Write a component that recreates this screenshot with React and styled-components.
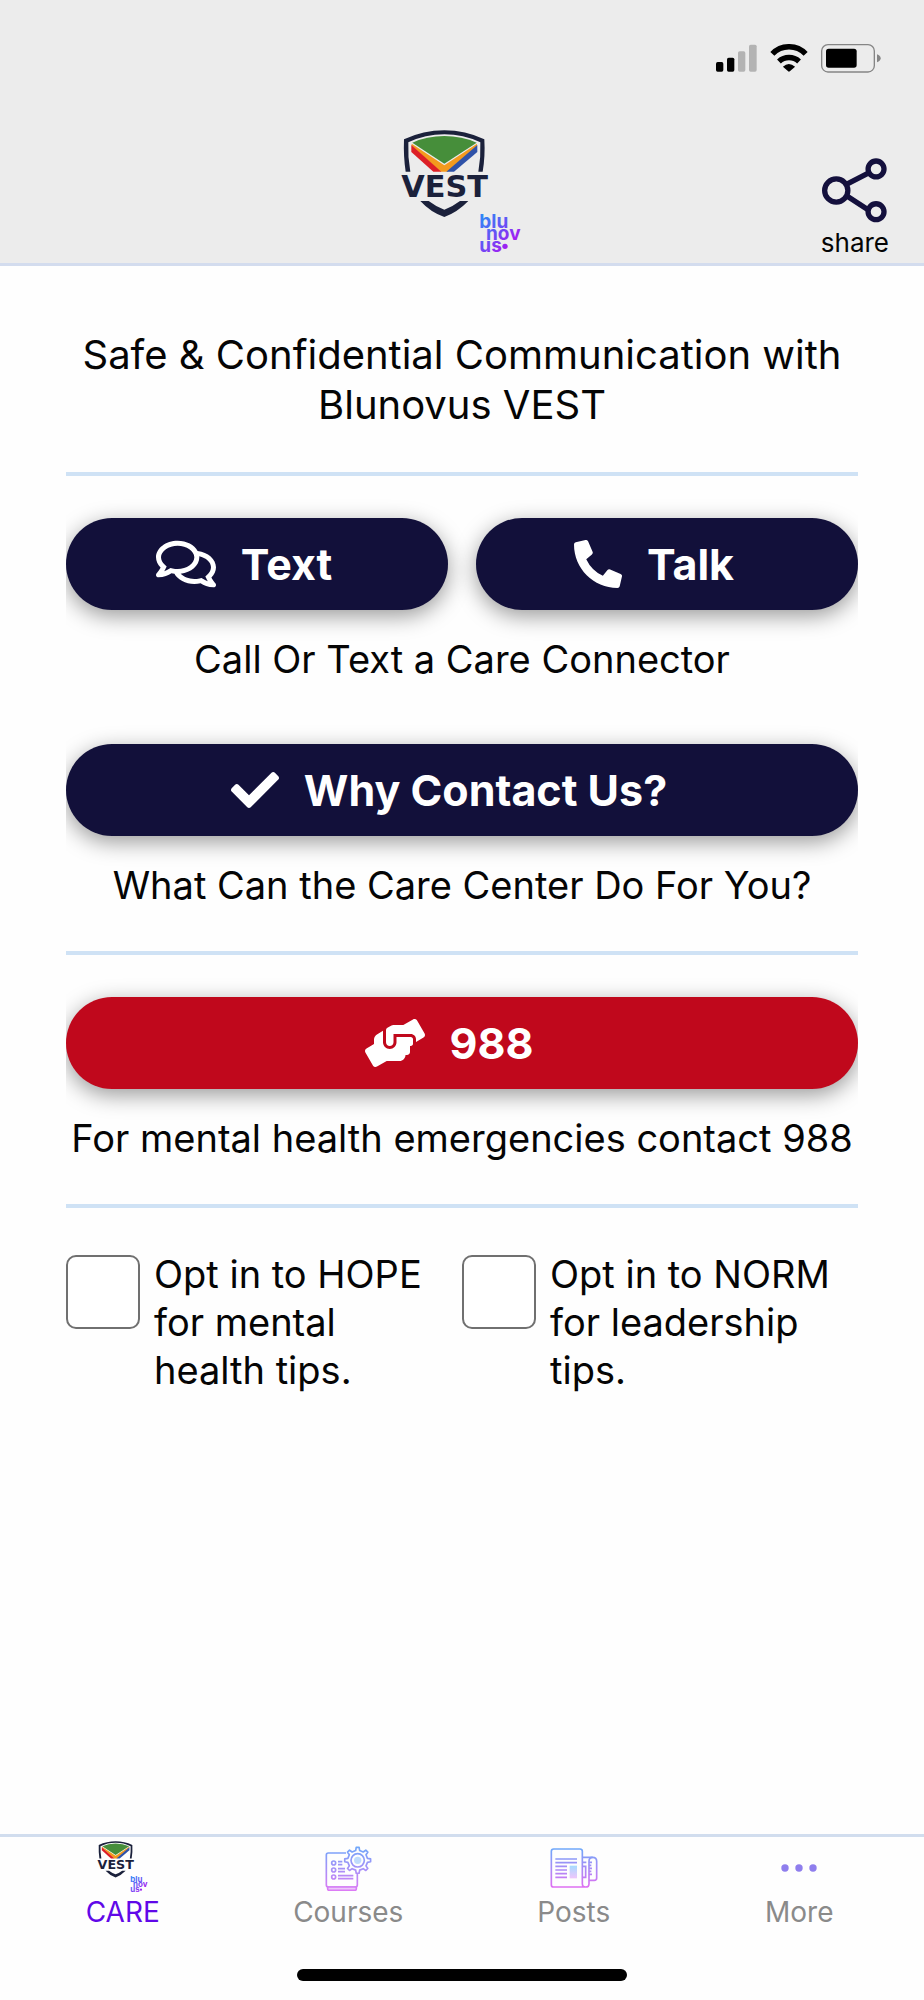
import React, { useId, useState } from "react";
import styled, { createGlobalStyle } from "styled-components";
import { FaCheck, FaHandsHelping, FaPhoneAlt, FaRegComments } from "react-icons/fa";

const GlobalStyle = createGlobalStyle`
  * {
    box-sizing: border-box;
  }

  body {
    margin: 0;
    background: #fefefe;
    color: #050505;
    font-family: Inter, "Liberation Sans", sans-serif;
  }

  h1, p {
    margin: 0;
    font-weight: 400;
  }

  svg {
    display: block;
  }
`;

const Page = styled.div`
  display: flex;
  flex-direction: column;
  min-height: 100vh;
`;

const Header = styled.header`
  padding: 44px 0 4px;
  background: #ececec;
  border-bottom: 3px solid #d3dcee;
`;

const StatusBar = styled.div`
  display: flex;
  justify-content: flex-end;
  gap: 13px;
  height: 28px;
  padding-right: 43px;
`;

const BrandRow = styled.div`
  display: grid;
  grid-template-columns: 1fr auto 1fr;
  align-items: end;
  margin-top: 58px;
  padding: 0 35px;
`;

const ShareButton = styled.button`
  grid-column: 3;
  justify-self: end;
  display: flex;
  flex-direction: column;
  align-items: center;
  gap: 4px;
  padding: 0;
  border: 0;
  background: none;
  color: #050505;
  font: 400 26px/32px Inter, sans-serif;
  cursor: pointer;
`;

const LogoCell = styled.div`
  grid-column: 2;
`;

const Main = styled.main`
  flex: 1;
  padding: 64px 66px;
`;

const Title = styled.h1`
  font-size: 40px;
  line-height: 50px;
  text-align: center;
`;

const Divider = styled.hr`
  height: 4px;
  margin: 42px 0;
  border: 0;
  background: #cfe2f5;
`;

const Section = styled.section`
  overflow-x: clip;

  & + & {
    margin-top: 61px;
  }
`;

const ButtonRow = styled.div`
  display: grid;
  grid-auto-flow: column;
  grid-auto-columns: 1fr;
  gap: 28px;
`;

const Pill = styled.button`
  display: flex;
  align-items: center;
  justify-content: center;
  gap: 25px;
  height: 92px;
  padding: 0 26px 0 0;
  border: 0;
  border-radius: 46px;
  background: ${({ $danger }) => ($danger ? "#c0081c" : "#12103a")};
  box-shadow: 0 6px 22px rgba(0, 0, 0, 0.4);
  color: #fff;
  font: 700 43px/54px Inter, sans-serif;
  cursor: pointer;

  svg {
    width: ${({ $wide }) => ($wide ? "60px" : "48px")};
    height: auto;
  }
`;

const Caption = styled.p`
  margin-top: 25px;
  font-size: 38px;
  line-height: 48px;
  text-align: center;
`;

const Options = styled.div`
  display: grid;
  grid-template-columns: 1fr 1fr;
`;

const Option = styled.div`
  display: flex;
  align-items: flex-start;
  gap: 14px;
  padding-right: 24px;
  font-size: 38px;
  line-height: 48px;
`;

const Checkbox = styled.input`
  appearance: none;
  flex: none;
  width: 74px;
  height: 74px;
  margin: 5px 0 0;
  border: 2px solid #707070;
  border-radius: 10px;
  background: #fff;

  &:checked {
    background: #12103a;
  }
`;

const TabBar = styled.nav`
  border-top: 3px solid #d1ddee;
  padding-bottom: 19px;
`;

const Tabs = styled.div`
  display: grid;
  grid-template-columns: repeat(4, 1fr);
  padding: 4px 12px 0 10px;
`;

const Tab = styled.a`
  display: flex;
  flex-direction: column;
  align-items: center;
  color: ${({ $active }) => ($active ? "#6008e8" : "#8a8a8a")};
  font-size: 28px;
  line-height: 34px;
  text-decoration: none;
`;

const TabIcon = styled.span`
  display: flex;
  align-items: center;
  height: 54px;
`;

const HomeIndicator = styled.div`
  width: 330px;
  height: 12px;
  margin: 40px auto 0;
  border-radius: 6px;
  background: #000;
`;

const Signal = () => (
  <svg width="41" height="28" viewBox="48 43 123 84" aria-hidden="true">
    <rect x="48" y="97" width="22" height="29" rx="5" />
    <rect x="81" y="84" width="22" height="42" rx="5" />
    <rect x="114" y="65" width="22" height="61" rx="5" fill="#b3b3b3" />
    <rect x="147" y="45" width="23" height="81" rx="5" fill="#b3b3b3" />
  </svg>
);

const Wifi = () => (
  <svg width="38" height="28" viewBox="209 41 115 85" aria-hidden="true">
    <g fill="none" stroke="#000" strokeWidth="17">
      <path d="M216 71A70 70 0 0 1 317 71" />
      <path d="M236 94A45 45 0 0 1 297 94" />
    </g>
    <path d="M248 110Q266 93 285 110L269 124Q266 126 264 124Z" />
  </svg>
);

const Battery = () => (
  <svg width="60" height="29" viewBox="363 43 180 87" aria-hidden="true">
    <rect x="365" y="45" width="158" height="82" rx="19" fill="none" stroke="#858585" strokeWidth="4" />
    <rect x="378" y="57" width="92" height="57" rx="8" />
    <path d="M531 74Q542 78 542 86Q542 94 531 98Z" fill="#858585" />
  </svg>
);

const ShareIcon = () => (
  <svg width="65" height="65" viewBox="362 384 196 196" fill="none" stroke="#14103d" strokeWidth="16" aria-hidden="true">
    <circle cx="405" cy="482" r="35" />
    <circle cx="525" cy="417" r="24" />
    <circle cx="525" cy="546" r="24" />
    <path d="M437 463L503 429M436 498L502 541" />
  </svg>
);

const Logo = ({ width, height }) => {
  const id = useId();
  return (
    <svg width={width} height={height} viewBox="60 60 372 387" role="img" aria-label="Blunovus VEST">
      <defs>
        <linearGradient id={id} gradientUnits="userSpaceOnUse" x1="302" y1="322" x2="400" y2="420">
          <stop offset="0" stopColor="#2f86f6" />
          <stop offset="0.5" stopColor="#6a4df5" />
          <stop offset="1" stopColor="#b80cf0" />
        </linearGradient>
      </defs>
      <g fill="#1b213b">
        <path d="M77 185Q70 140 72 88Q130 61 193 61Q256 61 313 88Q316 140 308 185H295Q303 140 301 97Q250 73 193 73Q136 73 85 97Q83 140 91 185Z" />
        <path d="M121 273H146Q168 290 193 299Q218 290 240 273H265Q232 307 193 321Q152 307 121 273Z" />
        <text x="194" y="262" textAnchor="middle" fontFamily="DejaVu Sans" fontWeight="700" fontSize="91">
          VEST
        </text>
      </g>
      <path d="M97 98Q140 78 193 78Q246 78 290 98L193 161Z" fill="#468e3a" />
      <path d="M95 101L193 166L291 101V108L204 185H182L95 107Z" fill="#f39a1d" />
      <path d="M94 105L184 185H160L94 126Z" fill="#dd1f26" />
      <path d="M292 105V126L222 185H199Z" fill="#2f52a8" />
      <g fill={`url(#${id})`} fontFamily="Inter" fontWeight="700" fontSize="57">
        <text>
          <tspan x="298" y="353">blu</tspan>
          <tspan x="318" y="389">nov</tspan>
          <tspan x="298" y="425">us</tspan>
        </text>
        <circle cx="375" cy="409" r="8" />
      </g>
    </svg>
  );
};

// outline of an eight-toothed cog centred on (cx, cy)
const cogPath = (cx, cy, inner, outer) => {
  const points = [];
  for (let i = 0; i < 8; i++) {
    const mid = (i * Math.PI) / 4;
    [[-0.2, inner], [-0.11, outer], [0.11, outer], [0.2, inner]].forEach(([offset, r]) => {
      points.push(`${(cx + r * Math.cos(mid + offset)).toFixed(1)} ${(cy + r * Math.sin(mid + offset)).toFixed(1)}`);
    });
  }
  return `M${points.join("L")}Z`;
};

const CoursesIcon = () => (
  <svg width="47" height="45" viewBox="801 64 141 135" fill="none" stroke="url(#courses)" strokeWidth="5" strokeLinejoin="round" aria-hidden="true">
    <defs>
      <linearGradient id="courses" gradientUnits="userSpaceOnUse" x1="0" y1="66" x2="0" y2="197">
        <stop offset="0" stopColor="#6fa8fa" />
        <stop offset="1" stopColor="#dc7bf5" />
      </linearGradient>
    </defs>
    <path d="M864 85H811Q805 85 805 91V181Q805 187 811 187H892Q898 187 898 181V148" />
    <path d="M809 187V193Q809 197 814 197H890Q895 197 895 193V187Z" fill="#edc8fa" />
    <circle cx="827" cy="115" r="6" />
    <circle cx="827" cy="136" r="6" />
    <circle cx="827" cy="157" r="6" />
    <path d="M840 111H853M840 120H853M840 132H861M840 141H861M840 153H886M840 162H886" />
    <path d={cogPath(899, 107, 30, 39)} />
    <circle cx="899" cy="107" r="20" />
    <circle cx="899" cy="107" r="11" fill="#bfdcfd" stroke="none" />
  </svg>
);

const PostsIcon = () => (
  <svg width="48" height="40" viewBox="155 70 144 120" fill="none" stroke="url(#posts)" strokeWidth="5" aria-hidden="true">
    <defs>
      <linearGradient id="posts" gradientUnits="userSpaceOnUse" x1="0" y1="72" x2="0" y2="188">
        <stop offset="0" stopColor="#6fa8fa" />
        <stop offset="1" stopColor="#df70f2" />
      </linearGradient>
      <linearGradient id="postsPhoto" x1="0" y1="0" x2="0" y2="1">
        <stop offset="0" stopColor="#a6dcff" />
        <stop offset="1" stopColor="#f0c6fb" />
      </linearGradient>
    </defs>
    <path d="M262 187H166Q159 187 159 180V80Q159 73 166 73H245Q252 73 252 80V177Q252 187 262 187Q272 187 272 177V110Q272 98 283 98Q295 98 295 110V160Q295 167 288 167H272" />
    <path d="M252 98H283M252 113H264M252 125H262V158H252" />
    <path d="M272 113H281M272 122H279M272 131H281M272 140H279M272 149H281" />
    <path d="M171 103H236M171 114H236M171 125H206M171 136H206M171 147H206M171 158H206" />
    <rect x="214" y="123" width="22" height="38" fill="url(#postsPhoto)" stroke="none" />
  </svg>
);

const MoreIcon = () => (
  <svg width="36" height="8" viewBox="0 0 36 8" fill="#8f7eed" aria-hidden="true">
    <circle cx="4" cy="4" r="3.7" />
    <circle cx="18" cy="4" r="3.7" />
    <circle cx="32" cy="4" r="3.7" />
  </svg>
);

const options = [
  { id: "hope", label: "Opt in to HOPE for mental health tips." },
  { id: "norm", label: "Opt in to NORM for leadership tips." },
];

const tabs = [
  { name: "CARE", icon: <Logo width={52} height={54} /> },
  { name: "Courses", icon: <CoursesIcon /> },
  { name: "Posts", icon: <PostsIcon /> },
  { name: "More", icon: <MoreIcon /> },
];

const App = () => {
  const [checked, setChecked] = useState({});

  const handleToggle = (id) => {
    setChecked({ ...checked, [id]: !checked[id] });
  };

  return (
    <Page>
      <GlobalStyle />
      <Header>
        <StatusBar>
          <Signal />
          <Wifi />
          <Battery />
        </StatusBar>
        <BrandRow>
          <LogoCell>
            <Logo width={124} height={129} />
          </LogoCell>
          <ShareButton type="button">
            <ShareIcon />
            share
          </ShareButton>
        </BrandRow>
      </Header>
      <Main>
        <Title>Safe &amp; Confidential Communication with Blunovus VEST</Title>
        <Divider />
        <Section>
          <ButtonRow>
            <Pill type="button" $wide>
              <FaRegComments />
              Text
            </Pill>
            <Pill type="button">
              <FaPhoneAlt />
              Talk
            </Pill>
          </ButtonRow>
          <Caption>Call Or Text a Care Connector</Caption>
        </Section>
        <Section>
          <ButtonRow>
            <Pill type="button">
              <FaCheck />
              Why Contact Us?
            </Pill>
          </ButtonRow>
          <Caption>What Can the Care Center Do For You?</Caption>
        </Section>
        <Divider />
        <Section>
          <ButtonRow>
            <Pill type="button" $danger $wide>
              <FaHandsHelping />
              988
            </Pill>
          </ButtonRow>
          <Caption>For mental health emergencies contact 988</Caption>
        </Section>
        <Divider />
        <Options>
          {options.map(({ id, label }) => (
            <Option key={id}>
              <Checkbox type="checkbox" id={id} checked={!!checked[id]} onChange={() => handleToggle(id)} />
              <label htmlFor={id}>{label}</label>
            </Option>
          ))}
        </Options>
      </Main>
      <TabBar>
        <Tabs>
          {tabs.map(({ name, icon }) => (
            <Tab key={name} href={`#${name.toLowerCase()}`} $active={name === "CARE"}>
              <TabIcon>{icon}</TabIcon>
              {name}
            </Tab>
          ))}
        </Tabs>
        <HomeIndicator />
      </TabBar>
    </Page>
  );
};

export default App;
